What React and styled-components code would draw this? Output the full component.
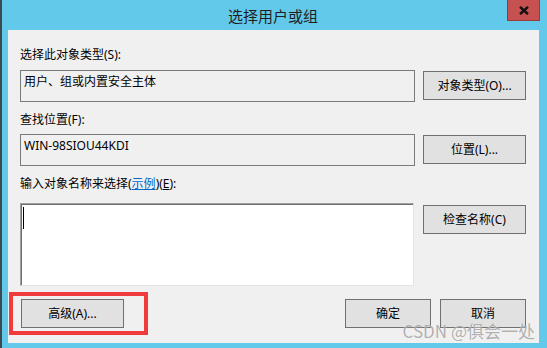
import React from "react";
import styled, { createGlobalStyle } from "styled-components";

const Global = createGlobalStyle`
  html, body { margin: 0; padding: 0; background: #63c9ea; }
  body { font-family: "Noto Sans", "Noto Sans CJK SC", sans-serif; }
`;

const Window = styled.div`
  width: 547px;
  height: 348px;
  box-sizing: border-box;
  background: #63c9ea;
  border-left: 2px solid #3c4a52;
  display: flex;
  flex-direction: column;
  overflow: hidden;
`;

const TitleBar = styled.div`
  height: 30px;
  flex: none;
  display: grid;
  grid-template-columns: 1fr auto 1fr;
  align-items: start;
`;

const Title = styled.div`
  grid-column: 2;
  font-family: "Noto Sans CJK SC", sans-serif;
  font-size: 15px;
  line-height: 30px;
  padding-top: 1px;
  padding-right: 3px;
  color: #1e1e1e;
`;

const CloseButton = styled.div`
  grid-column: 3;
  justify-self: end;
  margin-right: 7px;
  width: 33px;
  height: 21px;
  box-sizing: border-box;
  background: #c75050;
  border: 1px solid #9c3a3a;
  border-top: none;
  display: flex;
  align-items: center;
  justify-content: center;
`;

const Body = styled.div`
  flex: 1;
  margin: 0 8px 5px 6px;
  background: #f0f0f0;
  position: relative;
  display: flex;
  flex-direction: column;
  font-size: 12px;
  color: #000;
`;

const Form = styled.div`
  padding: 0 13px 0 12px;
  display: flex;
  flex-direction: column;
`;

const Label = styled.div`
  margin-top: ${(p) => p.$mt}px;
  line-height: 16px;
  height: 16px;
  white-space: nowrap;
`;

const Link = styled.span`
  color: #0066cc;
  text-decoration: underline;
`;

const Key = styled.span`
  text-decoration: underline;
`;

const Row = styled.div`
  margin-top: ${(p) => p.$mt}px;
  display: flex;
  align-items: flex-start;
  gap: 8px;
`;

const Field = styled.div`
  width: 395px;
  height: 32px;
  box-sizing: border-box;
  border: 1px solid #7a7a7a;
  background: #f0f0f0;
  padding: 3px 3px;
  line-height: 16px;
  white-space: nowrap;
`;

const TextArea = styled.div`
  width: 394px;
  height: 83px;
  box-sizing: border-box;
  background: #fff;
  border: 1px solid;
  border-color: #a0a0a0 #e3e3e3 #e3e3e3 #a0a0a0;
  box-shadow: inset 1px 1px 0 #6e6e6e;
  padding: 3px 0 0 2px;
`;

const Caret = styled.span`
  display: block;
  width: 1px;
  height: 22px;
  background: #000;
`;

const Button = styled.div`
  width: ${(p) => p.$w}px;
  height: 29px;
  margin-top: ${(p) => p.$mt || 0}px;
  margin-left: ${(p) => p.$ml || 0}px;
  flex: none;
  box-sizing: border-box;
  border: 1px solid #707070;
  background: #e1e1e1;
  display: flex;
  align-items: center;
  justify-content: center;
  line-height: 16px;
  white-space: nowrap;
`;

const Footer = styled.div`
  margin-top: 6px;
  padding: 0 13px 0 1px;
  display: flex;
  align-items: flex-start;
`;

const Highlight = styled.div`
  width: 139px;
  height: 43px;
  box-sizing: border-box;
  border: 4px solid #ef3b3b;
  padding: 3px 0 0 8px;
`;

const ActionGroup = styled.div`
  margin-left: auto;
  margin-top: 7px;
  display: flex;
  gap: 9px;
`;

const Watermark = styled.div`
  position: absolute;
  right: 4px;
  bottom: 1px;
  font-size: 17px;
  line-height: 22px;
  color: rgba(110, 110, 110, 0.55);
  text-shadow: 0 0 1px rgba(255, 255, 255, 0.9);
  font-family: "Noto Sans CJK SC", "Noto Sans", sans-serif;
  white-space: nowrap;
  pointer-events: none;
`;

export default function App() {
  return (
    <>
      <Global />
      <Window>
        <TitleBar>
          <Title>选择用户或组</Title>
          <CloseButton>
            <svg width="10" height="9" viewBox="0 0 10 9">
              <path d="M1 0.8 L9 8.2 M9 0.8 L1 8.2" stroke="#111" strokeWidth="2.4" fill="none" />
            </svg>
          </CloseButton>
        </TitleBar>
        <Body>
          <Form>
            <Label $mt={17}>选择此对象类型(S):</Label>
            <Row $mt={7}>
              <Field>用户、组或内置安全主体</Field>
              <Button $w={103} $mt={1}>对象类型(O)...</Button>
            </Row>
            <Label $mt={10}>查找位置(F):</Label>
            <Row $mt={6}>
              <Field>WIN-98SIOU44KDI</Field>
              <Button $w={103} $mt={1}>位置(L)...</Button>
            </Row>
            <Label $mt={10}>
              输入对象名称来选择(<Link>示例</Link>)(<Key>E</Key>):
            </Label>
            <Row $mt={11}>
              <TextArea>
                <Caret />
              </TextArea>
              <Button $w={103} $mt={2} $ml={1}>检查名称(C)</Button>
            </Row>
          </Form>
          <Footer>
            <Highlight>
              <Button $w={103}>高级(A)...</Button>
            </Highlight>
            <ActionGroup>
              <Button $w={86}>确定</Button>
              <Button $w={86}>取消</Button>
            </ActionGroup>
          </Footer>
          <Watermark>CSDN @俱会一处</Watermark>
        </Body>
      </Window>
    </>
  );
}
